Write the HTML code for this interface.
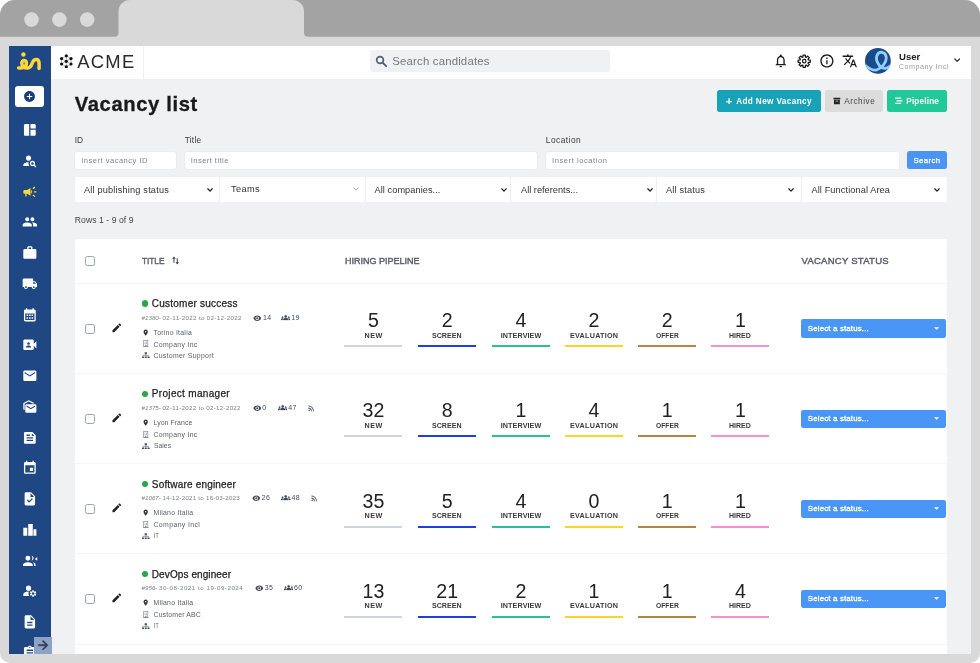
<!DOCTYPE html>
<html lang="en"><head><meta charset="utf-8"><title>Vacancy list</title>
<style>
html,body{margin:0;padding:0;background:#fff;}
body{width:980px;height:663px;overflow:hidden;position:relative;font-family:"Liberation Sans",sans-serif;}
#root{position:absolute;left:0;top:0;width:980px;height:663px;overflow:hidden;filter:blur(0.4px);}
.b{position:absolute;display:block;box-sizing:border-box;}
.t{position:absolute;display:block;white-space:nowrap;}
</style></head><body><div id="root">
<svg class="b" style="left:0;top:0" width="980" height="663" viewBox="0 0 980 663">
<path d="M0 15 A15 15 0 0 1 15 0 H965 A15 15 0 0 1 980 15 V653 A10 10 0 0 1 970 663 H10 A10 10 0 0 1 0 653 Z" fill="#d9d9d9"/>
<path d="M0 15 A15 15 0 0 1 15 0 H130 A11.5 11.5 0 0 0 118.5 11.5 V32.7 A4 4 0 0 1 114.5 36.7 H0 Z" fill="#a3a3a3"/>
<path d="M292.5 0 H965 A15 15 0 0 1 980 15 V36.7 H308 A4 4 0 0 1 304 32.7 V11.5 A11.5 11.5 0 0 0 292.5 0 Z" fill="#a3a3a3"/>
<circle cx="31.5" cy="19.6" r="7.3" fill="#d9d9d9"/><circle cx="59.4" cy="19.6" r="7.3" fill="#d9d9d9"/><circle cx="87.2" cy="19.6" r="7.3" fill="#d9d9d9"/>
</svg>
<div class="b" id="vp" style="left:9.20px;top:46.10px;width:961.60px;height:607.70px;background:#eff1f3;overflow:hidden;">
<div class="b" style="left:-9.20px;top:-46.10px;width:980px;height:663px;">
<div class="b" style="left:9.20px;top:46.00px;width:42.20px;height:610.00px;background:#1e4784;"></div>
<svg class="b" style="left:9.10px;top:46.00px;" width="42.00" height="34.00" viewBox="0 0 42 34"><g fill="none" stroke="#ffd83a" stroke-width="3.5" stroke-linecap="round" stroke-linejoin="round">
<path d="M9.6 22 C13 22.3 17.4 21.5 17.4 17.6 C17.4 13.6 12.8 13.4 12.8 17.2 C12.8 20.4 15.4 22.2 18.6 22.0 C22.4 21.8 22.6 18.2 23.6 16.2 C25.2 12.8 29.4 12.6 30.0 16.4 C30.3 18.6 30.1 21.0 30.1 22.6"/>
</g><circle cx="14.4" cy="8.5" r="2.2" fill="#ffd83a"/></svg>
<div class="b" style="left:14.50px;top:85.90px;width:29.30px;height:21.00px;background:#fff;border-radius:3px;"></div>
<svg class="b" style="left:22.80px;top:90.10px;" width="13.00" height="13.00" viewBox="0 0 24 24"><path fill="#1c3c78" d="M12 2C6.48 2 2 6.48 2 12s4.48 10 10 10 10-4.480 10-10S17.520 2 12 2zm5 11h-4v4h-2v-4H7v-2h4V7h2v4h4v2z"/></svg>
<svg class="b" style="left:22.15px;top:122.05px;" width="15.70" height="15.70" viewBox="0 0 24 24"><path fill="#fff" d="M11 21H5c-1.100 0-2-.9-2-2V5c0-1.100.9-2 2-2h6v18zm2 0h6c1.100 0 2-.9 2-2v-7h-8v9zm8-11V5c0-1.100-.9-2-2-2h-6v7h8z"/></svg>
<svg class="b" style="left:22.15px;top:152.81px;" width="15.70" height="15.70" viewBox="0 0 24 24"><path fill="#fff" d="M10 12c2.210 0 4-1.790 4-4s-1.790-4-4-4-4 1.790-4 4 1.790 4 4 4zm.350 2.010C7.620 13.910 2 15.270 2 18v2h9.540c-2.470-2.760-1.230-5.890-1.190-5.990zm9.080 4.010c.360-.590.570-1.280.570-2.020 0-2.210-1.790-4-4-4s-4 1.790-4 4 1.790 4 4 4c.740 0 1.430-.220 2.020-.570L20.590 22 22 20.590l-2.570-2.570zM16 18c-1.100 0-2-.9-2-2s.9-2 2-2 2 .9 2 2-.9 2-2 2z"/></svg>
<svg class="b" style="left:22.15px;top:183.57px;" width="15.70" height="15.70" viewBox="0 0 24 24"><path fill="#ffd83a" d="M18 11v2h4v-2h-4zm-2 6.610c.960.710 2.210 1.650 3.200 2.390.4-.530.8-1.070 1.200-1.600-.990-.740-2.240-1.680-3.200-2.400-.4.540-.8 1.080-1.200 1.610zM20.400 5.600c-.4-.530-.8-1.070-1.200-1.600-.990.740-2.240 1.680-3.200 2.400.4.530.8 1.070 1.200 1.600.960-.720 2.210-1.650 3.200-2.400zM4 9c-1.100 0-2 .9-2 2v2c0 1.100.9 2 2 2h1v4h2v-4h1l5 3V6L8 9H4zm11.500 3c0-1.330-.580-2.530-1.500-3.350v6.690c.920-.810 1.500-2.010 1.500-3.340z"/></svg>
<svg class="b" style="left:22.15px;top:214.33px;" width="15.70" height="15.70" viewBox="0 0 24 24"><path fill="#fff" d="M16 11c1.660 0 2.990-1.340 2.990-3S17.660 5 16 5c-1.660 0-3 1.340-3 3s1.340 3 3 3zm-8 0c1.660 0 2.990-1.340 2.990-3S9.660 5 8 5C6.340 5 5 6.340 5 8s1.340 3 3 3zm0 2c-2.330 0-7 1.170-7 3.500V19h14v-2.500c0-2.330-4.670-3.500-7-3.500zm8 0c-.290 0-.620.020-.970.050 1.160.840 1.970 1.970 1.970 3.450V19h6v-2.500c0-2.330-4.670-3.500-7-3.500z"/></svg>
<svg class="b" style="left:22.15px;top:245.09px;" width="15.70" height="15.70" viewBox="0 0 24 24"><path fill="#fff" d="M20 6h-4V4c0-1.110-.890-2-2-2h-4c-1.110 0-2 .890-2 2v2H4c-1.110 0-1.990.890-1.990 2L2 19c0 1.110.890 2 2 2h16c1.110 0 2-.890 2-2V8c0-1.110-.890-2-2-2zm-6 0h-4V4h4v2z"/></svg>
<svg class="b" style="left:22.15px;top:275.85px;" width="15.70" height="15.70" viewBox="0 0 24 24"><path fill="#fff" d="M20 8h-3V4H3c-1.100 0-2 .9-2 2v11h2c0 1.660 1.340 3 3 3s3-1.340 3-3h6c0 1.660 1.340 3 3 3s3-1.340 3-3h2v-5l-3-4zM6 18.500c-.830 0-1.500-.670-1.500-1.500s.670-1.500 1.500-1.500 1.500.670 1.500 1.500-.670 1.500-1.500 1.500zm13.500-9l1.960 2.500H17V9.500h2.500zm-1.500 9c-.830 0-1.500-.670-1.500-1.500s.670-1.500 1.500-1.500 1.500.670 1.500 1.500-.670 1.500-1.500 1.500z"/></svg>
<svg class="b" style="left:22.15px;top:306.61px;" width="15.70" height="15.70" viewBox="0 0 24 24"><path fill="#fff" d="M19 4h-1V2h-2v2H8V2H6v2H5c-1.110 0-1.990.9-1.990 2L3 20c0 1.100.890 2 2 2h14c1.100 0 2-.9 2-2V6c0-1.100-.9-2-2-2zm0 16H5V10h14v10zM7 11.500h2.400v2.400H7zm3.800 0h2.400v2.400h-2.400zm3.800 0H17v2.400h-2.400zM7 15.600h2.400V18H7zm3.800 0h2.400V18h-2.400zm3.800 0H17V18h-2.400z"/></svg>
<svg class="b" style="left:22.15px;top:337.37px;" width="15.70" height="15.70" viewBox="0 0 24 24"><path fill="#fff" d="M18 10.480V6c0-1.100-.9-2-2-2H4c-1.100 0-2 .9-2 2v12c0 1.100.9 2 2 2h12c1.100 0 2-.9 2-2v-4.480l4 3.980v-11l-4 3.980zM10 8c1.100 0 2 .9 2 2s-.9 2-2 2-2-.9-2-2 .9-2 2-2zm4 8H6v-.570c0-.810.480-1.530 1.220-1.850.850-.370 1.790-.580 2.780-.580.990 0 1.930.210 2.780.580.740.320 1.220 1.040 1.220 1.850V16z"/></svg>
<svg class="b" style="left:22.15px;top:368.13px;" width="15.70" height="15.70" viewBox="0 0 24 24"><path fill="#fff" d="M20 4H4c-1.100 0-1.990.9-1.990 2L2 18c0 1.100.9 2 2 2h16c1.100 0 2-.9 2-2V6c0-1.100-.9-2-2-2zm0 4l-8 5-8-5V6l8 5 8-5v2z"/></svg>
<svg class="b" style="left:22.15px;top:398.89px;" width="15.70" height="15.70" viewBox="0 0 24 24"><path fill="#fff" d="M18.830 7h-2.600L10.500 4 4 7.400V17c-1.100 0-2-.9-2-2V7.170c0-.530.320-1.090.8-1.340L10.500 2l7.540 3.830c.430.230.730.7.790 1.170zM20 8H7c-1.100 0-2 .9-2 2v9c0 1.100.9 2 2 2h13c1.100 0 2-.9 2-2v-9c0-1.100-.9-2-2-2zm0 3.670L13.500 15.500 7 11.670V10l6.500 3.830L20 10v1.670z"/></svg>
<svg class="b" style="left:22.15px;top:429.65px;" width="15.70" height="15.70" viewBox="0 0 24 24"><path fill="#fff" d="M16 3H5C3.900 3 3 3.900 3 5v14c0 1.100.9 2 2 2h14c1.100 0 2-.9 2-2V8L16 3z M7 7h5v2H7V7z M17 17H7v-2h10V17z M17 13H7v-2h10V13z M15 9V5l4 4H15z"/></svg>
<svg class="b" style="left:22.15px;top:460.41px;" width="15.70" height="15.70" viewBox="0 0 24 24"><path fill="#fff" d="M17 12h-5v5h5v-5zM16 1v2H8V1H6v2H5c-1.110 0-1.990.9-1.990 2L3 19c0 1.100.890 2 2 2h14c1.100 0 2-.9 2-2V5c0-1.100-.9-2-2-2h-1V1h-2zm3 18H5V8h14v11z"/></svg>
<svg class="b" style="left:22.15px;top:491.17px;" width="15.70" height="15.70" viewBox="0 0 24 24"><path fill="#fff" d="M14 2H6c-1.100 0-1.990.9-1.990 2L4 20c0 1.100.890 2 1.990 2H18c1.100 0 2-.9 2-2V8l-6-6zm-3.060 16L7.400 14.460l1.410-1.410 2.120 2.120 4.240-4.240 1.410 1.410L10.940 18zM13 9V3.500L18.500 9H13z"/></svg>
<svg class="b" style="left:22.15px;top:521.93px;" width="15.70" height="15.70" viewBox="0 0 24 24"><path fill="#fff" d="M2 8.800h6V21H2z M9.500 3h7v18h-7z M17.500 11H22v10h-4.500z"/></svg>
<svg class="b" style="left:22.15px;top:552.69px;" width="15.70" height="15.70" viewBox="0 0 24 24"><path fill="#fff" d="M5.200 8a3.800 3.800 0 1 0 7.600 0a3.800 3.800 0 1 0-7.600 0z M1.500 20v-2c0-2.700 5-4 7.500-4s7.500 1.300 7.500 4v2z M14.500 4.300c1.900.4 3.200 2 3.200 3.700s-1.300 3.300-3.200 3.700c.9-1 1.400-2.300 1.400-3.700s-.5-2.700-1.400-3.700z M16.500 14.300c2.200.5 4.300 1.700 4.300 3.700v2h-2.300v-2c0-1.500-.8-2.700-2-3.700z M23.300 6.300v5.400L19.600 9z"/></svg>
<svg class="b" style="left:22.15px;top:583.45px;" width="15.70" height="15.70" viewBox="0 0 24 24"><path fill="#fff" d="M6 8a4 4 0 1 0 8 0a4 4 0 1 0-8 0zM10.670 13.020c-.220-.010-.440-.020-.670-.020-2.420 0-4.680.670-6.610 1.820-.880.520-1.390 1.500-1.390 2.530V20h9.260c-.790-1.130-1.260-2.510-1.260-4 0-1.070.250-2.070.670-2.980zM20.750 16c0-.220-.030-.420-.060-.630l1.140-1.010-1-1.730-1.450.490c-.320-.270-.680-.480-1.080-.630L18 11h-2l-.300 1.490c-.4.150-.760.360-1.080.630l-1.450-.490-1 1.730 1.140 1.010c-.030.210-.060.410-.060.630s.030.420.060.630l-1.140 1.010 1 1.730 1.450-.490c.320.270.680.480 1.080.630L16 21h2l.300-1.490c.4-.150.760-.360 1.080-.630l1.450.490 1-1.730-1.140-1.010c.030-.210.060-.410.060-.630zM17 18c-1.100 0-2-.9-2-2s.9-2 2-2 2 .9 2 2-.9 2-2 2z"/></svg>
<svg class="b" style="left:22.15px;top:614.21px;" width="15.70" height="15.70" viewBox="0 0 24 24"><path fill="#fff" d="M14 2H6c-1.100 0-1.990.9-1.990 2L4 20c0 1.100.890 2 1.990 2H18c1.100 0 2-.9 2-2V8l-6-6zm2 16H8v-2h8v2zm0-4H8v-2h8v2zm-3-5V3.500L18.500 9H13z"/></svg>
<svg class="b" style="left:22.15px;top:644.97px;" width="15.70" height="15.70" viewBox="0 0 24 24"><path fill="#fff" d="M19 3h-4.180C14.400 1.840 13.300 1 12 1c-1.300 0-2.400.840-2.820 2H5c-1.100 0-2 .9-2 2v14c0 1.100.9 2 2 2h14c1.100 0 2-.9 2-2V5c0-1.100-.9-2-2-2zm-7 0c.550 0 1 .450 1 1s-.450 1-1 1-1-.450-1-1 .450-1 1-1zm2 14H7v-2h7v2zm3-4H7v-2h10v2zm0-4H7V7h10v2z"/></svg>
<div class="b" style="left:34.30px;top:636.80px;width:17.30px;height:17.50px;background:#8da2c4;"></div>
<svg class="b" style="left:35.60px;top:637.70px;" width="14.40" height="14.40" viewBox="0 0 24 24"><path fill="#2b3a55" stroke="#2b3a55" stroke-width="0.9" d="M12 4l-1.410 1.410L16.170 11H4v2h12.170l-5.580 5.590L12 20l8-8z"/></svg>
<div class="b" style="left:51.40px;top:46.00px;width:920.00px;height:33.30px;background:#fff;"></div>
<div class="b" style="left:143.30px;top:46.00px;width:0.80px;height:33.30px;background:#f2f2f2;"></div>
<svg class="b" style="left:58.50px;top:53.60px;" width="14.60" height="14.60" viewBox="0 0 24 24"><line x1="12" y1="12" x2="12.00" y2="3.00" stroke="#555" stroke-width="0.7"/><line x1="12.00" y1="3.00" x2="19.79" y2="7.50" stroke="#555" stroke-width="0.7"/><line x1="12" y1="12" x2="19.79" y2="7.50" stroke="#555" stroke-width="0.7"/><line x1="19.79" y1="7.50" x2="19.79" y2="16.50" stroke="#555" stroke-width="0.7"/><line x1="12" y1="12" x2="19.79" y2="16.50" stroke="#555" stroke-width="0.7"/><line x1="19.79" y1="16.50" x2="12.00" y2="21.00" stroke="#555" stroke-width="0.7"/><line x1="12" y1="12" x2="12.00" y2="21.00" stroke="#555" stroke-width="0.7"/><line x1="12.00" y1="21.00" x2="4.21" y2="16.50" stroke="#555" stroke-width="0.7"/><line x1="12" y1="12" x2="4.21" y2="16.50" stroke="#555" stroke-width="0.7"/><line x1="4.21" y1="16.50" x2="4.21" y2="7.50" stroke="#555" stroke-width="0.7"/><line x1="12" y1="12" x2="4.21" y2="7.50" stroke="#555" stroke-width="0.7"/><line x1="4.21" y1="7.50" x2="12.00" y2="3.00" stroke="#555" stroke-width="0.7"/><circle cx="12.00" cy="3.00" r="2.6" fill="#111"/><circle cx="19.79" cy="7.50" r="2.6" fill="#111"/><circle cx="19.79" cy="16.50" r="2.6" fill="#111"/><circle cx="12.00" cy="21.00" r="2.6" fill="#111"/><circle cx="4.21" cy="16.50" r="2.6" fill="#111"/><circle cx="4.21" cy="7.50" r="2.6" fill="#111"/><circle cx="12" cy="12" r="2.6" fill="#111"/></svg>
<span class="t" style="left:77.20px;top:51px;font-size:18.40px;line-height:21px;color:#2a2a2a;letter-spacing:1.279px;">ACME</span>
<div class="b" style="left:370.20px;top:49.90px;width:240.00px;height:22.40px;background:#eff1f3;border-radius:3px;"></div>
<svg class="b" style="left:374.60px;top:55.00px;" width="12.60" height="12.60" viewBox="0 0 24 24"><circle cx="9.6" cy="9.6" r="6.4" fill="none" stroke="#4f5d73" stroke-width="3.2"/><path d="M14.6 14.600L21.2 21.200" stroke="#4f5d73" stroke-width="3.6" stroke-linecap="round"/></svg>
<span class="t" style="left:392.30px;top:55px;font-size:11.40px;line-height:12px;color:#777;letter-spacing:0.174px;">Search candidates</span>
<svg class="b" style="left:772.80px;top:53.20px;" width="15.60" height="15.60" viewBox="0 0 24 24"><path fill="#1b1b1b" d="M12 22c1.100 0 2-.9 2-2h-4c0 1.100.9 2 2 2zm6-6v-5c0-3.070-1.630-5.640-4.500-6.320V4c0-.830-.670-1.500-1.500-1.500s-1.500.670-1.500 1.500v.680C7.640 5.360 6 7.920 6 11v5l-2 2v1h16v-1l-2-2zm-2 1H8v-6c0-2.480 1.510-4.500 4-4.500s4 2.020 4 4.500v6z"/></svg>
<svg class="b" style="left:796.50px;top:53.80px;" width="14.40" height="14.40" viewBox="0 0 24 24"><path d="M22.11 10.05 L22.11 13.95 L18.88 14.13 L18.37 15.36 L20.53 17.78 L17.78 20.53 L15.36 18.37 L14.13 18.88 L13.95 22.11 L10.05 22.11 L9.87 18.88 L8.64 18.37 L6.22 20.53 L3.47 17.78 L5.63 15.36 L5.12 14.13 L1.89 13.95 L1.89 10.05 L5.12 9.87 L5.63 8.64 L3.47 6.22 L6.22 3.47 L8.64 5.63 L9.87 5.12 L10.05 1.89 L13.95 1.89 L14.13 5.12 L15.36 5.63 L17.78 3.47 L20.53 6.22 L18.37 8.64 L18.88 9.87 Z" fill="none" stroke="#1b1b1b" stroke-width="2.1" stroke-linejoin="round"/><circle cx="12" cy="12" r="2.9" fill="none" stroke="#1b1b1b" stroke-width="2"/></svg>
<svg class="b" style="left:818.90px;top:53.10px;" width="15.80" height="15.80" viewBox="0 0 24 24"><path fill="#1b1b1b" d="M11 7h2v2h-2zm0 4h2v6h-2zm1-9C6.480 2 2 6.480 2 12s4.480 10 10 10 10-4.480 10-10S17.520 2 12 2zm0 18c-4.410 0-8-3.590-8-8s3.590-8 8-8 8 3.590 8 8-3.590 8-8 8z"/></svg>
<svg class="b" style="left:842.20px;top:53.40px;" width="15.60" height="15.60" viewBox="0 0 24 24"><path fill="#1b1b1b" d="M12.870 15.070l-2.540-2.510.030-.030c1.740-1.940 2.980-4.170 3.710-6.530H17V4h-7V2H8v2H1v1.990h11.170C11.500 7.920 10.440 9.750 9 11.350 8.070 10.320 7.300 9.190 6.690 8h-2c.730 1.630 1.730 3.170 2.980 4.560l-5.090 5.020L4 19l5-5 3.110 3.110.760-2.040zM18.500 10h-2L12 22h2l1.120-3h4.750L21 22h2l-4.500-12zm-2.620 7l1.620-4.330L19.120 17h-3.240z"/></svg>
<svg class="b" style="left:865.20px;top:48.40px;" width="25.80" height="25.80" viewBox="0 0 25.8 25.8"><defs><clipPath id="avc"><circle cx="12.9" cy="12.9" r="12.9"/></clipPath></defs>
<circle cx="12.9" cy="12.9" r="12.9" fill="#1b4a8c"/>
<g clip-path="url(#avc)"><path d="M-1 16.5 C2.5 19.5 7 23 11.5 22 C16.5 20.5 22 14 21.2 9 C20.4 3.5 14.2 2.6 12 7.4 C10.2 11.8 13.2 17.6 17.2 19.8 C20.4 21.4 23.8 19.6 27 16.6" fill="none" stroke="#8fd0ff" stroke-width="2.800" stroke-linecap="round"/></g></svg>
<span class="t" style="left:898.80px;top:51px;font-size:9.70px;line-height:11px;color:#222;font-weight:700;transform:scaleX(0.9829);transform-origin:0 0;">User</span>
<span class="t" style="left:898.80px;top:62px;font-size:7.20px;line-height:9px;color:#9aa0a8;letter-spacing:0.508px;">Company Incl</span>
<svg class="b" style="left:954.00px;top:58.30px;" width="6.40" height="4.40" viewBox="0 0 8 5"><path d="M1 1 L4 4 L7 1" fill="none" stroke="#333" stroke-width="1.5" stroke-linecap="round" stroke-linejoin="round"/></svg>
<span class="t" style="left:74.80px;top:93px;font-size:20.20px;line-height:22px;color:#1a1a1a;font-weight:700;letter-spacing:0.622px;-webkit-text-stroke:0.3px #1a1a1a;">Vacancy list</span>
<div class="b" style="left:717.20px;top:89.70px;width:103.50px;height:22.10px;background:#17a2b8;border-radius:2.5px;"></div>
<span class="t" style="left:725.70px;top:95px;font-size:11.20px;line-height:12px;color:#fff;font-weight:700;">+</span>
<span class="t" style="left:736.20px;top:97px;font-size:8.20px;line-height:9px;color:#fff;font-weight:700;letter-spacing:0.373px;">Add New Vacancy</span>
<div class="b" style="left:824.80px;top:89.70px;width:58.10px;height:22.10px;background:#dcdcdc;border-radius:2.5px;"></div>
<svg class="b" style="left:833.00px;top:96.80px;" width="7.80" height="7.80" viewBox="0 0 16 16"><path d="M1 1.500h14v3.800H1z M2 6.300h12V15H2z" fill="#222"/><rect x="5.5" y="7.800" width="5" height="1.600" fill="#dcdcdc"/></svg>
<span class="t" style="left:844.20px;top:97px;font-size:8.20px;line-height:9px;color:#444;letter-spacing:0.543px;">Archive</span>
<div class="b" style="left:887.30px;top:89.70px;width:59.80px;height:22.10px;background:#20c997;border-radius:2.5px;"></div>
<svg class="b" style="left:895.20px;top:97.00px;" width="7.60" height="7.60" viewBox="0 0 13.5 14"><path d="M0 1h11v2.200H0z M2.5 5.900h11v2.200h-11z M0 10.800h11V13H0z" fill="#fff"/></svg>
<span class="t" style="left:906.30px;top:97px;font-size:8.20px;line-height:9px;color:#fff;font-weight:700;letter-spacing:0.166px;">Pipeline</span>
<span class="t" style="left:74.80px;top:135px;font-size:8.40px;line-height:10px;color:#3a3a3a;">ID</span>
<span class="t" style="left:184.70px;top:135px;font-size:8.40px;line-height:10px;color:#3a3a3a;letter-spacing:0.236px;">Title</span>
<span class="t" style="left:545.80px;top:135px;font-size:8.40px;line-height:10px;color:#3a3a3a;letter-spacing:0.463px;">Location</span>
<div class="b" style="left:74.80px;top:151.50px;width:101.40px;height:17.70px;background:#fff;border-radius:2.5px;box-shadow:0 0 0 0.6px #e6e9ec;"></div>
<div class="b" style="left:184.70px;top:151.50px;width:352.40px;height:17.70px;background:#fff;border-radius:2.5px;box-shadow:0 0 0 0.6px #e6e9ec;"></div>
<div class="b" style="left:545.80px;top:151.50px;width:353.00px;height:17.70px;background:#fff;border-radius:2.5px;box-shadow:0 0 0 0.6px #e6e9ec;"></div>
<span class="t" style="left:81.20px;top:156px;font-size:7.60px;line-height:9px;color:#7f848b;letter-spacing:0.481px;">Insert vacancy ID</span>
<span class="t" style="left:190.80px;top:156px;font-size:7.60px;line-height:9px;color:#7f848b;letter-spacing:0.423px;">Insert title</span>
<span class="t" style="left:552.00px;top:156px;font-size:7.60px;line-height:9px;color:#7f848b;letter-spacing:0.549px;">Insert location</span>
<div class="b" style="left:907.20px;top:151.40px;width:39.90px;height:18.10px;background:#4a94f5;border-radius:2.5px;"></div>
<span class="t" style="left:913.55px;top:156px;font-size:7.90px;line-height:9px;color:#fff;letter-spacing:0.294px;-webkit-text-stroke:0.25px #fff;">Search</span>
<div class="b" style="left:74.80px;top:177.30px;width:144.50px;height:25.10px;background:#fff;border-radius:2px;"></div>
<span class="t" style="left:83.90px;top:185px;font-size:9.20px;line-height:10px;color:#333;letter-spacing:0.185px;">All publishing status</span>
<svg class="b" style="left:206.50px;top:187.80px;" width="6.00" height="4.00" viewBox="0 0 9 6"><path d="M1.200 1.200 L4.500 4.600 L7.800 1.200" fill="none" stroke="#222" stroke-width="1.900" stroke-linecap="round" stroke-linejoin="round"/></svg>
<div class="b" style="left:220.24px;top:177.30px;width:144.50px;height:25.10px;background:#fff;border-radius:2px;"></div>
<span class="t" style="left:231.00px;top:184px;font-size:9.20px;line-height:10px;color:#333;letter-spacing:0.376px;">Teams</span>
<svg class="b" style="left:352.54px;top:187.20px;" width="6.00" height="4.20" viewBox="0 0 9 6"><path d="M1 1 L4.500 4.500 L8 1" fill="none" stroke="#888" stroke-width="1.200" stroke-linecap="round" stroke-linejoin="round"/></svg>
<div class="b" style="left:365.68px;top:177.30px;width:144.50px;height:25.10px;background:#fff;border-radius:2px;"></div>
<span class="t" style="left:374.50px;top:185px;font-size:9.20px;line-height:10px;color:#333;letter-spacing:0.071px;">All companies...</span>
<svg class="b" style="left:500.88px;top:187.80px;" width="6.00" height="4.00" viewBox="0 0 9 6"><path d="M1.200 1.200 L4.500 4.600 L7.800 1.200" fill="none" stroke="#222" stroke-width="1.900" stroke-linecap="round" stroke-linejoin="round"/></svg>
<div class="b" style="left:511.12px;top:177.30px;width:144.50px;height:25.10px;background:#fff;border-radius:2px;"></div>
<span class="t" style="left:521.00px;top:185px;font-size:9.20px;line-height:10px;color:#333;letter-spacing:0.017px;">All referents...</span>
<svg class="b" style="left:646.72px;top:187.80px;" width="6.00" height="4.00" viewBox="0 0 9 6"><path d="M1.200 1.200 L4.500 4.600 L7.800 1.200" fill="none" stroke="#222" stroke-width="1.900" stroke-linecap="round" stroke-linejoin="round"/></svg>
<div class="b" style="left:656.56px;top:177.30px;width:144.50px;height:25.10px;background:#fff;border-radius:2px;"></div>
<span class="t" style="left:666.00px;top:185px;font-size:9.20px;line-height:10px;color:#333;letter-spacing:0.186px;">All status</span>
<svg class="b" style="left:788.06px;top:187.80px;" width="6.00" height="4.00" viewBox="0 0 9 6"><path d="M1.200 1.200 L4.500 4.600 L7.800 1.200" fill="none" stroke="#222" stroke-width="1.900" stroke-linecap="round" stroke-linejoin="round"/></svg>
<div class="b" style="left:802.00px;top:177.30px;width:144.50px;height:25.10px;background:#fff;border-radius:2px;"></div>
<span class="t" style="left:811.50px;top:185px;font-size:9.20px;line-height:10px;color:#333;letter-spacing:0.100px;">All Functional Area</span>
<svg class="b" style="left:933.50px;top:187.80px;" width="6.00" height="4.00" viewBox="0 0 9 6"><path d="M1.200 1.200 L4.500 4.600 L7.800 1.200" fill="none" stroke="#222" stroke-width="1.900" stroke-linecap="round" stroke-linejoin="round"/></svg>
<span class="t" style="left:74.80px;top:215px;font-size:8.60px;line-height:10px;color:#444;letter-spacing:0.062px;">Rows 1 - 9 of 9</span>
<div class="b" style="left:74.80px;top:238.60px;width:872.30px;height:430.00px;background:#fff;border-radius:3px;"></div>
<div class="b" style="left:85.40px;top:255.90px;width:10.00px;height:10.00px;background:#fff;border-radius:2.4px;border:1.2px solid #9aa2b2;"></div>
<span class="t" style="left:142.20px;top:255px;font-size:9.50px;line-height:11px;color:#5a6270;transform:scaleX(0.8661);transform-origin:0 0;-webkit-text-stroke:0.45px #5a6270;">TITLE</span>
<svg class="b" style="left:172.40px;top:256.30px;" width="7.20" height="9.00" viewBox="0 0 10 12"><path d="M2.700 0.300 L0.200 3.400 H2 V9 H3.400 V3.400 H5.200 Z M7.300 11.700 L4.800 8.600 H6.600 V3 H8 V8.600 H9.800 Z" fill="#3a4150"/></svg>
<span class="t" style="left:345.00px;top:255px;font-size:9.50px;line-height:11px;color:#5a6270;transform:scaleX(0.9471);transform-origin:0 0;-webkit-text-stroke:0.45px #5a6270;">HIRING PIPELINE</span>
<span class="t" style="left:801.50px;top:255px;font-size:9.50px;line-height:11px;color:#5a6270;letter-spacing:0.257px;-webkit-text-stroke:0.45px #5a6270;">VACANCY STATUS</span>
<div class="b" style="left:74.80px;top:283.30px;width:872.30px;height:0.90px;background:#f5f6f8;"></div>
<div class="b" style="left:85.40px;top:323.90px;width:10.00px;height:10.00px;background:#fff;border-radius:2.4px;border:1.2px solid #9aa2b2;"></div>
<svg class="b" style="left:111.30px;top:321.90px;" width="11.60" height="11.60" viewBox="0 0 24 24"><path fill="#222" d="M3 17.250V21h3.750L17.810 9.940l-3.750-3.750L3 17.250zM20.710 7.040c.390-.390.390-1.020 0-1.410l-2.340-2.340c-.390-.390-1.020-.390-1.410 0l-1.830 1.830 3.750 3.750 1.830-1.830z"/></svg>
<div class="b" style="left:141.6px;top:300.40px;width:6.2px;height:6.2px;border-radius:50%;background:#28a745;"></div>
<span class="t" style="left:151.80px;top:298px;font-size:10.00px;line-height:11px;color:#222;letter-spacing:0.237px;-webkit-text-stroke:0.25px #222;">Customer success</span>
<span class="t" style="left:141.60px;top:314px;font-size:6.20px;line-height:7px;color:#7d8188;font-style:italic;">#1380-</span>
<span class="t" style="left:162.40px;top:314px;font-size:6.20px;line-height:7px;color:#7d8188;letter-spacing:0.331px;">02-11-2022 to 02-12-2022</span>
<svg class="b" style="left:252.80px;top:313.50px;" width="8.60" height="8.60" viewBox="0 0 24 24"><path fill="#414a58" d="M12 4.500C7 4.500 2.730 7.610 1 12c1.730 4.390 6 7.500 11 7.500s9.270-3.110 11-7.500c-1.730-4.390-6-7.500-11-7.500zM12 17c-2.760 0-5-2.240-5-5s2.240-5 5-5 5 2.240 5 5-2.240 5-5 5zm0-8c-1.660 0-3 1.340-3 3s1.340 3 3 3 3-1.340 3-3-1.340-3-3-3z"/></svg>
<span class="t" style="left:263.00px;top:314px;font-size:7.00px;line-height:7px;color:#414a58;letter-spacing:0.467px;">14</span>
<svg class="b" style="left:281.00px;top:312.80px;" width="9.40" height="9.40" viewBox="0 0 24 24"><path fill="#414a58" stroke="#414a58" stroke-width="0.7" d="M12 12.750c1.630 0 3.070.390 4.240.9 1.080.480 1.760 1.560 1.760 2.730V18H6v-1.610c0-1.180.680-2.260 1.760-2.730 1.170-.520 2.610-.910 4.240-.910zM4 13c1.100 0 2-.9 2-2s-.9-2-2-2-2 .9-2 2 .9 2 2 2zm1.130 1.100c-.370-.060-.740-.1-1.130-.1-.990 0-1.930.210-2.780.580C.480 14.900 0 15.620 0 16.430V18h4.500v-1.610c0-.830.230-1.610.630-2.290zM20 13c1.100 0 2-.9 2-2s-.9-2-2-2-2 .9-2 2 .9 2 2 2zm4 3.430c0-.810-.480-1.530-1.220-1.850-.850-.370-1.790-.580-2.780-.580-.390 0-.760.040-1.130.1.4.680.630 1.460.630 2.290V18H24v-1.570zM12 6c1.660 0 3 1.340 3 3s-1.340 3-3 3-3-1.340-3-3 1.340-3 3-3z"/></svg>
<span class="t" style="left:291.20px;top:314px;font-size:7.00px;line-height:7px;color:#414a58;letter-spacing:0.467px;">19</span>
<svg class="b" style="left:142.30px;top:328.50px;" width="7.40" height="7.40" viewBox="0 0 24 24"><path fill="#333" d="M12 2C8.130 2 5 5.130 5 9c0 5.250 7 13 7 13s7-7.750 7-13c0-3.870-3.130-7-7-7zm0 9.500c-1.380 0-2.500-1.120-2.500-2.500s1.120-2.500 2.500-2.500 2.500 1.120 2.500 2.500-1.120 2.500-2.500 2.500z"/></svg>
<span class="t" style="left:153.50px;top:329px;font-size:6.90px;line-height:7px;color:#5b6068;letter-spacing:0.251px;">Torino Italia</span>
<svg class="b" style="left:143.30px;top:340.40px;" width="5.60" height="7.30" viewBox="0 0 12 14"><rect x="1.600" y="0.600" width="8.800" height="12" fill="none" stroke="#6b7280" stroke-width="1.200"/><path d="M0 13h12" stroke="#6b7280" stroke-width="1.200"/><path d="M3.600 3h1.600v1.600H3.600zM6.800 3h1.600v1.600H6.800zM3.600 6h1.600v1.600H3.600zM6.800 6h1.600v1.600H6.800zM4.800 9.400h2.400V12.600H4.800z" fill="#6b7280"/></svg>
<span class="t" style="left:153.50px;top:341px;font-size:6.90px;line-height:7px;color:#5b6068;letter-spacing:0.315px;">Company Inc</span>
<svg class="b" style="left:142.20px;top:352.40px;" width="7.60" height="6.40" viewBox="0 0 16 12"><path d="M5.600 0h4.800v4H5.600z M0 8.500h4.400v3.500H0z M5.800 8.500h4.400v3.500H5.800z M11.600 8.500H16v3.500h-4.400z" fill="#4b5563"/><path d="M8 4v2.300M2.200 8.500V6.300h11.600v2.200M8 6.300v2.200" fill="none" stroke="#4b5563" stroke-width="1.100"/></svg>
<span class="t" style="left:153.50px;top:352px;font-size:6.90px;line-height:7px;color:#5b6068;letter-spacing:0.281px;">Customer Support</span>
<span class="t" style="left:368.00px;top:309px;font-size:19.60px;line-height:22px;color:#222;">5</span>
<span class="t" style="left:364.45px;top:331px;font-size:7.20px;line-height:9px;color:#3a3a3a;font-weight:700;letter-spacing:0.601px;">NEW</span>
<div class="b" style="left:344.40px;top:345.30px;width:58.10px;height:2.10px;background:#cfd4de;"></div>
<span class="t" style="left:441.80px;top:309px;font-size:19.60px;line-height:22px;color:#222;">2</span>
<span class="t" style="left:432.45px;top:331px;font-size:7.20px;line-height:9px;color:#3a3a3a;font-weight:700;transform:scaleX(0.9864);transform-origin:0 0;">SCREEN</span>
<div class="b" style="left:418.20px;top:345.30px;width:58.10px;height:2.10px;background:#1f3fe6;"></div>
<span class="t" style="left:515.60px;top:309px;font-size:19.60px;line-height:22px;color:#222;">4</span>
<span class="t" style="left:500.75px;top:331px;font-size:7.20px;line-height:9px;color:#3a3a3a;font-weight:700;letter-spacing:0.091px;">INTERVIEW</span>
<div class="b" style="left:492.00px;top:345.30px;width:58.10px;height:2.10px;background:#2bbf9b;"></div>
<span class="t" style="left:588.60px;top:309px;font-size:19.60px;line-height:22px;color:#222;">2</span>
<span class="t" style="left:570.05px;top:331px;font-size:7.20px;line-height:9px;color:#3a3a3a;font-weight:700;letter-spacing:0.252px;">EVALUATION</span>
<div class="b" style="left:565.00px;top:345.30px;width:58.10px;height:2.10px;background:#ffd426;"></div>
<span class="t" style="left:661.70px;top:309px;font-size:19.60px;line-height:22px;color:#222;">2</span>
<span class="t" style="left:655.75px;top:331px;font-size:7.20px;line-height:9px;color:#3a3a3a;font-weight:700;transform:scaleX(0.9345);transform-origin:0 0;">OFFER</span>
<div class="b" style="left:638.10px;top:345.30px;width:58.10px;height:2.10px;background:#b5853f;"></div>
<span class="t" style="left:734.90px;top:309px;font-size:19.60px;line-height:22px;color:#222;">1</span>
<span class="t" style="left:729.40px;top:331px;font-size:7.20px;line-height:9px;color:#3a3a3a;font-weight:700;transform:scaleX(0.9776);transform-origin:0 0;">HIRED</span>
<div class="b" style="left:711.30px;top:345.30px;width:58.10px;height:2.10px;background:#f78fd0;"></div>
<div class="b" style="left:800.80px;top:319.40px;width:145.00px;height:18.30px;background:#4a96f7;border-radius:2.2px;"></div>
<span class="t" style="left:807.80px;top:324px;font-size:7.90px;line-height:9px;color:#fff;letter-spacing:0.153px;-webkit-text-stroke:0.3px #fff;">Select a status...</span>
<svg class="b" style="left:934.20px;top:327.10px;" width="5.20" height="3.00" viewBox="0 0 10 5"><path d="M0 0h10L5 5z" fill="#fff"/></svg>
<div class="b" style="left:74.80px;top:373.20px;width:872.30px;height:0.90px;background:#f5f6f8;"></div>
<div class="b" style="left:85.40px;top:414.00px;width:10.00px;height:10.00px;background:#fff;border-radius:2.4px;border:1.2px solid #9aa2b2;"></div>
<svg class="b" style="left:111.30px;top:412.00px;" width="11.60" height="11.60" viewBox="0 0 24 24"><path fill="#222" d="M3 17.250V21h3.750L17.810 9.940l-3.750-3.750L3 17.250zM20.710 7.040c.390-.390.390-1.020 0-1.410l-2.340-2.340c-.390-.390-1.020-.390-1.410 0l-1.830 1.830 3.750 3.750 1.830-1.830z"/></svg>
<div class="b" style="left:141.6px;top:390.50px;width:6.2px;height:6.2px;border-radius:50%;background:#28a745;"></div>
<span class="t" style="left:151.80px;top:388px;font-size:10.00px;line-height:11px;color:#222;letter-spacing:0.324px;-webkit-text-stroke:0.25px #222;">Project manager</span>
<span class="t" style="left:141.60px;top:404px;font-size:6.20px;line-height:7px;color:#7d8188;font-style:italic;">#1375-</span>
<span class="t" style="left:162.40px;top:404px;font-size:6.20px;line-height:7px;color:#7d8188;letter-spacing:0.292px;">02-11-2022 to 02-12-2022</span>
<svg class="b" style="left:252.50px;top:403.60px;" width="8.60" height="8.60" viewBox="0 0 24 24"><path fill="#414a58" d="M12 4.500C7 4.500 2.730 7.610 1 12c1.730 4.390 6 7.500 11 7.500s9.270-3.110 11-7.500c-1.730-4.390-6-7.500-11-7.500zM12 17c-2.760 0-5-2.240-5-5s2.240-5 5-5 5 2.240 5 5-2.240 5-5 5zm0-8c-1.660 0-3 1.340-3 3s1.340 3 3 3 3-1.340 3-3-1.340-3-3-3z"/></svg>
<span class="t" style="left:262.20px;top:404px;font-size:7.00px;line-height:7px;color:#414a58;">0</span>
<svg class="b" style="left:277.90px;top:402.90px;" width="9.40" height="9.40" viewBox="0 0 24 24"><path fill="#414a58" stroke="#414a58" stroke-width="0.7" d="M12 12.750c1.630 0 3.070.390 4.240.9 1.080.480 1.760 1.560 1.760 2.730V18H6v-1.610c0-1.180.680-2.260 1.760-2.730 1.170-.520 2.610-.910 4.240-.910zM4 13c1.100 0 2-.9 2-2s-.9-2-2-2-2 .9-2 2 .9 2 2 2zm1.130 1.100c-.370-.060-.740-.1-1.130-.1-.990 0-1.930.210-2.780.580C.480 14.900 0 15.620 0 16.430V18h4.500v-1.610c0-.830.230-1.610.630-2.290zM20 13c1.100 0 2-.9 2-2s-.9-2-2-2-2 .9-2 2 .9 2 2 2zm4 3.430c0-.810-.480-1.530-1.220-1.850-.850-.370-1.790-.580-2.780-.580-.390 0-.760.040-1.130.1.4.680.630 1.460.630 2.290V18H24v-1.570zM12 6c1.660 0 3 1.340 3 3s-1.340 3-3 3-3-1.340-3-3 1.340-3 3-3z"/></svg>
<span class="t" style="left:288.20px;top:404px;font-size:7.00px;line-height:7px;color:#414a58;letter-spacing:0.467px;">47</span>
<svg class="b" style="left:306.80px;top:403.50px;" width="8.60" height="8.60" viewBox="0 0 24 24"><path fill="#5b6470" d="M6.180 15.640a2.180 2.180 0 1 0 0 4.360a2.180 2.180 0 1 0 0-4.360zM4 4.440v2.830c7.030 0 12.730 5.700 12.730 12.730h2.830c0-8.590-6.970-15.560-15.560-15.560zm0 5.660v2.830c3.900 0 7.070 3.170 7.070 7.070h2.830c0-5.470-4.430-9.900-9.900-9.900z"/></svg>
<svg class="b" style="left:142.30px;top:418.60px;" width="7.40" height="7.40" viewBox="0 0 24 24"><path fill="#333" d="M12 2C8.130 2 5 5.130 5 9c0 5.250 7 13 7 13s7-7.750 7-13c0-3.870-3.130-7-7-7zm0 9.500c-1.380 0-2.500-1.120-2.500-2.500s1.120-2.500 2.500-2.500 2.500 1.120 2.500 2.500-1.120 2.500-2.500 2.500z"/></svg>
<span class="t" style="left:153.50px;top:419px;font-size:6.90px;line-height:7px;color:#5b6068;letter-spacing:0.070px;">Lyon France</span>
<svg class="b" style="left:143.30px;top:430.50px;" width="5.60" height="7.30" viewBox="0 0 12 14"><rect x="1.600" y="0.600" width="8.800" height="12" fill="none" stroke="#6b7280" stroke-width="1.200"/><path d="M0 13h12" stroke="#6b7280" stroke-width="1.200"/><path d="M3.600 3h1.600v1.600H3.600zM6.800 3h1.600v1.600H6.800zM3.600 6h1.600v1.600H3.600zM6.800 6h1.600v1.600H6.800zM4.800 9.400h2.400V12.600H4.800z" fill="#6b7280"/></svg>
<span class="t" style="left:153.50px;top:431px;font-size:6.90px;line-height:7px;color:#5b6068;letter-spacing:0.315px;">Company Inc</span>
<svg class="b" style="left:142.20px;top:442.50px;" width="7.60" height="6.40" viewBox="0 0 16 12"><path d="M5.600 0h4.800v4H5.600z M0 8.500h4.400v3.500H0z M5.800 8.500h4.400v3.500H5.800z M11.600 8.500H16v3.500h-4.400z" fill="#4b5563"/><path d="M8 4v2.300M2.200 8.500V6.300h11.600v2.200M8 6.300v2.200" fill="none" stroke="#4b5563" stroke-width="1.100"/></svg>
<span class="t" style="left:153.50px;top:442px;font-size:6.90px;line-height:7px;color:#5b6068;transform:scaleX(0.9907);transform-origin:0 0;">Sales</span>
<span class="t" style="left:362.55px;top:399px;font-size:19.60px;line-height:22px;color:#222;">32</span>
<span class="t" style="left:364.45px;top:421px;font-size:7.20px;line-height:9px;color:#3a3a3a;font-weight:700;letter-spacing:0.601px;">NEW</span>
<div class="b" style="left:344.40px;top:435.40px;width:58.10px;height:2.10px;background:#cfd4de;"></div>
<span class="t" style="left:441.80px;top:399px;font-size:19.60px;line-height:22px;color:#222;">8</span>
<span class="t" style="left:432.45px;top:421px;font-size:7.20px;line-height:9px;color:#3a3a3a;font-weight:700;transform:scaleX(0.9864);transform-origin:0 0;">SCREEN</span>
<div class="b" style="left:418.20px;top:435.40px;width:58.10px;height:2.10px;background:#1f3fe6;"></div>
<span class="t" style="left:515.60px;top:399px;font-size:19.60px;line-height:22px;color:#222;">1</span>
<span class="t" style="left:500.75px;top:421px;font-size:7.20px;line-height:9px;color:#3a3a3a;font-weight:700;letter-spacing:0.091px;">INTERVIEW</span>
<div class="b" style="left:492.00px;top:435.40px;width:58.10px;height:2.10px;background:#2bbf9b;"></div>
<span class="t" style="left:588.60px;top:399px;font-size:19.60px;line-height:22px;color:#222;">4</span>
<span class="t" style="left:570.05px;top:421px;font-size:7.20px;line-height:9px;color:#3a3a3a;font-weight:700;letter-spacing:0.252px;">EVALUATION</span>
<div class="b" style="left:565.00px;top:435.40px;width:58.10px;height:2.10px;background:#ffd426;"></div>
<span class="t" style="left:661.70px;top:399px;font-size:19.60px;line-height:22px;color:#222;">1</span>
<span class="t" style="left:655.75px;top:421px;font-size:7.20px;line-height:9px;color:#3a3a3a;font-weight:700;transform:scaleX(0.9345);transform-origin:0 0;">OFFER</span>
<div class="b" style="left:638.10px;top:435.40px;width:58.10px;height:2.10px;background:#b5853f;"></div>
<span class="t" style="left:734.90px;top:399px;font-size:19.60px;line-height:22px;color:#222;">1</span>
<span class="t" style="left:729.40px;top:421px;font-size:7.20px;line-height:9px;color:#3a3a3a;font-weight:700;transform:scaleX(0.9776);transform-origin:0 0;">HIRED</span>
<div class="b" style="left:711.30px;top:435.40px;width:58.10px;height:2.10px;background:#f78fd0;"></div>
<div class="b" style="left:800.80px;top:409.50px;width:145.00px;height:18.30px;background:#4a96f7;border-radius:2.2px;"></div>
<span class="t" style="left:807.80px;top:414px;font-size:7.90px;line-height:9px;color:#fff;letter-spacing:0.153px;-webkit-text-stroke:0.3px #fff;">Select a status...</span>
<svg class="b" style="left:934.20px;top:417.20px;" width="5.20" height="3.00" viewBox="0 0 10 5"><path d="M0 0h10L5 5z" fill="#fff"/></svg>
<div class="b" style="left:74.80px;top:463.30px;width:872.30px;height:0.90px;background:#f5f6f8;"></div>
<div class="b" style="left:85.40px;top:504.10px;width:10.00px;height:10.00px;background:#fff;border-radius:2.4px;border:1.2px solid #9aa2b2;"></div>
<svg class="b" style="left:111.30px;top:502.10px;" width="11.60" height="11.60" viewBox="0 0 24 24"><path fill="#222" d="M3 17.250V21h3.750L17.810 9.940l-3.750-3.750L3 17.250zM20.710 7.040c.390-.390.390-1.020 0-1.410l-2.340-2.340c-.390-.390-1.020-.390-1.410 0l-1.830 1.830 3.750 3.750 1.830-1.830z"/></svg>
<div class="b" style="left:141.6px;top:480.60px;width:6.2px;height:6.2px;border-radius:50%;background:#28a745;"></div>
<span class="t" style="left:151.80px;top:479px;font-size:10.00px;line-height:11px;color:#222;letter-spacing:0.184px;-webkit-text-stroke:0.25px #222;">Software engineer</span>
<span class="t" style="left:141.60px;top:494px;font-size:6.20px;line-height:7px;color:#7d8188;font-style:italic;">#1067-</span>
<span class="t" style="left:162.40px;top:494px;font-size:6.20px;line-height:7px;color:#7d8188;letter-spacing:0.237px;">14-12-2021 to 16-03-2023</span>
<svg class="b" style="left:251.90px;top:493.70px;" width="8.60" height="8.60" viewBox="0 0 24 24"><path fill="#414a58" d="M12 4.500C7 4.500 2.730 7.610 1 12c1.730 4.390 6 7.500 11 7.500s9.270-3.110 11-7.500c-1.730-4.390-6-7.500-11-7.500zM12 17c-2.760 0-5-2.240-5-5s2.240-5 5-5 5 2.240 5 5-2.240 5-5 5zm0-8c-1.660 0-3 1.340-3 3s1.340 3 3 3 3-1.340 3-3-1.340-3-3-3z"/></svg>
<span class="t" style="left:261.60px;top:494px;font-size:7.00px;line-height:7px;color:#414a58;letter-spacing:0.467px;">26</span>
<svg class="b" style="left:281.20px;top:493.00px;" width="9.40" height="9.40" viewBox="0 0 24 24"><path fill="#414a58" stroke="#414a58" stroke-width="0.7" d="M12 12.750c1.630 0 3.070.390 4.240.9 1.080.480 1.760 1.560 1.760 2.730V18H6v-1.610c0-1.180.680-2.260 1.760-2.730 1.170-.520 2.610-.910 4.240-.910zM4 13c1.100 0 2-.9 2-2s-.9-2-2-2-2 .9-2 2 .9 2 2 2zm1.130 1.100c-.370-.060-.740-.1-1.130-.1-.990 0-1.930.210-2.780.580C.480 14.900 0 15.620 0 16.430V18h4.500v-1.610c0-.830.230-1.610.630-2.290zM20 13c1.100 0 2-.9 2-2s-.9-2-2-2-2 .9-2 2 .9 2 2 2zm4 3.430c0-.810-.480-1.530-1.220-1.850-.850-.370-1.790-.580-2.780-.580-.390 0-.760.040-1.130.1.4.680.630 1.460.630 2.290V18H24v-1.570zM12 6c1.660 0 3 1.340 3 3s-1.340 3-3 3-3-1.340-3-3 1.340-3 3-3z"/></svg>
<span class="t" style="left:291.50px;top:494px;font-size:7.00px;line-height:7px;color:#414a58;letter-spacing:0.467px;">48</span>
<svg class="b" style="left:310.40px;top:493.60px;" width="8.60" height="8.60" viewBox="0 0 24 24"><path fill="#5b6470" d="M6.180 15.640a2.180 2.180 0 1 0 0 4.360a2.180 2.180 0 1 0 0-4.360zM4 4.440v2.830c7.030 0 12.730 5.700 12.730 12.730h2.830c0-8.590-6.970-15.560-15.560-15.560zm0 5.660v2.830c3.900 0 7.070 3.170 7.070 7.070h2.830c0-5.470-4.430-9.900-9.900-9.900z"/></svg>
<svg class="b" style="left:142.30px;top:508.70px;" width="7.40" height="7.40" viewBox="0 0 24 24"><path fill="#333" d="M12 2C8.130 2 5 5.130 5 9c0 5.250 7 13 7 13s7-7.750 7-13c0-3.870-3.130-7-7-7zm0 9.500c-1.380 0-2.500-1.120-2.500-2.500s1.120-2.500 2.500-2.500 2.500 1.120 2.500 2.500-1.120 2.500-2.500 2.500z"/></svg>
<span class="t" style="left:153.50px;top:509px;font-size:6.90px;line-height:7px;color:#5b6068;letter-spacing:0.240px;">Milano Italia</span>
<svg class="b" style="left:143.30px;top:520.60px;" width="5.60" height="7.30" viewBox="0 0 12 14"><rect x="1.600" y="0.600" width="8.800" height="12" fill="none" stroke="#6b7280" stroke-width="1.200"/><path d="M0 13h12" stroke="#6b7280" stroke-width="1.200"/><path d="M3.600 3h1.600v1.600H3.600zM6.800 3h1.600v1.600H6.800zM3.600 6h1.600v1.600H3.600zM6.800 6h1.600v1.600H6.800zM4.800 9.400h2.400V12.600H4.800z" fill="#6b7280"/></svg>
<span class="t" style="left:153.50px;top:521px;font-size:6.90px;line-height:7px;color:#5b6068;letter-spacing:0.383px;">Company Incl</span>
<svg class="b" style="left:142.20px;top:532.60px;" width="7.60" height="6.40" viewBox="0 0 16 12"><path d="M5.600 0h4.800v4H5.600z M0 8.500h4.400v3.500H0z M5.800 8.500h4.400v3.500H5.800z M11.600 8.500H16v3.500h-4.400z" fill="#4b5563"/><path d="M8 4v2.300M2.200 8.500V6.300h11.600v2.200M8 6.300v2.200" fill="none" stroke="#4b5563" stroke-width="1.100"/></svg>
<span class="t" style="left:153.50px;top:532px;font-size:6.90px;line-height:7px;color:#5b6068;transform:scaleX(0.7502);transform-origin:0 0;">IT</span>
<span class="t" style="left:362.55px;top:490px;font-size:19.60px;line-height:22px;color:#222;">35</span>
<span class="t" style="left:364.45px;top:511px;font-size:7.20px;line-height:9px;color:#3a3a3a;font-weight:700;letter-spacing:0.601px;">NEW</span>
<div class="b" style="left:344.40px;top:525.50px;width:58.10px;height:2.10px;background:#cfd4de;"></div>
<span class="t" style="left:441.80px;top:490px;font-size:19.60px;line-height:22px;color:#222;">5</span>
<span class="t" style="left:432.45px;top:511px;font-size:7.20px;line-height:9px;color:#3a3a3a;font-weight:700;transform:scaleX(0.9864);transform-origin:0 0;">SCREEN</span>
<div class="b" style="left:418.20px;top:525.50px;width:58.10px;height:2.10px;background:#1f3fe6;"></div>
<span class="t" style="left:515.60px;top:490px;font-size:19.60px;line-height:22px;color:#222;">4</span>
<span class="t" style="left:500.75px;top:511px;font-size:7.20px;line-height:9px;color:#3a3a3a;font-weight:700;letter-spacing:0.091px;">INTERVIEW</span>
<div class="b" style="left:492.00px;top:525.50px;width:58.10px;height:2.10px;background:#2bbf9b;"></div>
<span class="t" style="left:588.60px;top:490px;font-size:19.60px;line-height:22px;color:#222;">0</span>
<span class="t" style="left:570.05px;top:511px;font-size:7.20px;line-height:9px;color:#3a3a3a;font-weight:700;letter-spacing:0.252px;">EVALUATION</span>
<div class="b" style="left:565.00px;top:525.50px;width:58.10px;height:2.10px;background:#ffd426;"></div>
<span class="t" style="left:661.70px;top:490px;font-size:19.60px;line-height:22px;color:#222;">1</span>
<span class="t" style="left:655.75px;top:511px;font-size:7.20px;line-height:9px;color:#3a3a3a;font-weight:700;transform:scaleX(0.9345);transform-origin:0 0;">OFFER</span>
<div class="b" style="left:638.10px;top:525.50px;width:58.10px;height:2.10px;background:#b5853f;"></div>
<span class="t" style="left:734.90px;top:490px;font-size:19.60px;line-height:22px;color:#222;">1</span>
<span class="t" style="left:729.40px;top:511px;font-size:7.20px;line-height:9px;color:#3a3a3a;font-weight:700;transform:scaleX(0.9776);transform-origin:0 0;">HIRED</span>
<div class="b" style="left:711.30px;top:525.50px;width:58.10px;height:2.10px;background:#f78fd0;"></div>
<div class="b" style="left:800.80px;top:499.60px;width:145.00px;height:18.30px;background:#4a96f7;border-radius:2.2px;"></div>
<span class="t" style="left:807.80px;top:504px;font-size:7.90px;line-height:9px;color:#fff;letter-spacing:0.153px;-webkit-text-stroke:0.3px #fff;">Select a status...</span>
<svg class="b" style="left:934.20px;top:507.30px;" width="5.20" height="3.00" viewBox="0 0 10 5"><path d="M0 0h10L5 5z" fill="#fff"/></svg>
<div class="b" style="left:74.80px;top:553.40px;width:872.30px;height:0.90px;background:#f5f6f8;"></div>
<div class="b" style="left:85.40px;top:594.20px;width:10.00px;height:10.00px;background:#fff;border-radius:2.4px;border:1.2px solid #9aa2b2;"></div>
<svg class="b" style="left:111.30px;top:592.20px;" width="11.60" height="11.60" viewBox="0 0 24 24"><path fill="#222" d="M3 17.250V21h3.750L17.810 9.940l-3.750-3.750L3 17.250zM20.710 7.040c.390-.390.390-1.020 0-1.410l-2.340-2.340c-.390-.390-1.020-.390-1.410 0l-1.830 1.830 3.750 3.750 1.830-1.830z"/></svg>
<div class="b" style="left:141.6px;top:570.70px;width:6.2px;height:6.2px;border-radius:50%;background:#28a745;"></div>
<span class="t" style="left:151.80px;top:569px;font-size:10.00px;line-height:11px;color:#222;letter-spacing:0.099px;-webkit-text-stroke:0.25px #222;">DevOps engineer</span>
<span class="t" style="left:141.60px;top:584px;font-size:6.20px;line-height:7px;color:#7d8188;font-style:italic;">#956-</span>
<span class="t" style="left:158.96px;top:584px;font-size:6.20px;line-height:7px;color:#7d8188;letter-spacing:0.518px;">30-08-2021 to 19-09-2024</span>
<svg class="b" style="left:254.70px;top:583.80px;" width="8.60" height="8.60" viewBox="0 0 24 24"><path fill="#414a58" d="M12 4.500C7 4.500 2.730 7.610 1 12c1.730 4.390 6 7.500 11 7.500s9.270-3.110 11-7.500c-1.730-4.390-6-7.500-11-7.500zM12 17c-2.760 0-5-2.240-5-5s2.240-5 5-5 5 2.240 5 5-2.240 5-5 5zm0-8c-1.660 0-3 1.340-3 3s1.340 3 3 3 3-1.340 3-3-1.340-3-3-3z"/></svg>
<span class="t" style="left:264.70px;top:584px;font-size:7.00px;line-height:7px;color:#414a58;letter-spacing:0.467px;">35</span>
<svg class="b" style="left:284.10px;top:583.10px;" width="9.40" height="9.40" viewBox="0 0 24 24"><path fill="#414a58" stroke="#414a58" stroke-width="0.7" d="M12 12.750c1.630 0 3.070.390 4.240.9 1.080.480 1.760 1.560 1.760 2.730V18H6v-1.610c0-1.180.680-2.260 1.760-2.730 1.170-.520 2.610-.910 4.240-.910zM4 13c1.100 0 2-.9 2-2s-.9-2-2-2-2 .9-2 2 .9 2 2 2zm1.130 1.100c-.370-.060-.740-.1-1.130-.1-.990 0-1.930.210-2.780.580C.480 14.900 0 15.620 0 16.430V18h4.500v-1.610c0-.830.230-1.610.630-2.290zM20 13c1.100 0 2-.9 2-2s-.9-2-2-2-2 .9-2 2 .9 2 2 2zm4 3.430c0-.810-.480-1.530-1.220-1.850-.850-.370-1.790-.580-2.780-.580-.390 0-.760.040-1.130.1.4.680.630 1.460.630 2.290V18H24v-1.570zM12 6c1.660 0 3 1.340 3 3s-1.340 3-3 3-3-1.340-3-3 1.340-3 3-3z"/></svg>
<span class="t" style="left:293.90px;top:584px;font-size:7.00px;line-height:7px;color:#414a58;letter-spacing:0.467px;">60</span>
<svg class="b" style="left:142.30px;top:598.80px;" width="7.40" height="7.40" viewBox="0 0 24 24"><path fill="#333" d="M12 2C8.130 2 5 5.130 5 9c0 5.250 7 13 7 13s7-7.750 7-13c0-3.870-3.130-7-7-7zm0 9.500c-1.380 0-2.500-1.120-2.500-2.500s1.120-2.500 2.500-2.500 2.500 1.120 2.500 2.500-1.120 2.500-2.500 2.500z"/></svg>
<span class="t" style="left:153.50px;top:599px;font-size:6.90px;line-height:7px;color:#5b6068;letter-spacing:0.240px;">Milano Italia</span>
<svg class="b" style="left:143.30px;top:610.70px;" width="5.60" height="7.30" viewBox="0 0 12 14"><rect x="1.600" y="0.600" width="8.800" height="12" fill="none" stroke="#6b7280" stroke-width="1.200"/><path d="M0 13h12" stroke="#6b7280" stroke-width="1.200"/><path d="M3.600 3h1.600v1.600H3.600zM6.800 3h1.600v1.600H6.800zM3.600 6h1.600v1.600H3.600zM6.800 6h1.600v1.600H6.800zM4.800 9.400h2.400V12.600H4.800z" fill="#6b7280"/></svg>
<span class="t" style="left:153.50px;top:611px;font-size:6.90px;line-height:7px;color:#5b6068;letter-spacing:0.152px;">Customer ABC</span>
<svg class="b" style="left:142.20px;top:622.70px;" width="7.60" height="6.40" viewBox="0 0 16 12"><path d="M5.600 0h4.800v4H5.600z M0 8.500h4.400v3.500H0z M5.800 8.500h4.400v3.500H5.800z M11.600 8.500H16v3.500h-4.400z" fill="#4b5563"/><path d="M8 4v2.300M2.200 8.500V6.300h11.600v2.200M8 6.300v2.200" fill="none" stroke="#4b5563" stroke-width="1.100"/></svg>
<span class="t" style="left:153.50px;top:622px;font-size:6.90px;line-height:7px;color:#5b6068;transform:scaleX(0.7502);transform-origin:0 0;">IT</span>
<span class="t" style="left:362.55px;top:580px;font-size:19.60px;line-height:22px;color:#222;">13</span>
<span class="t" style="left:364.45px;top:601px;font-size:7.20px;line-height:9px;color:#3a3a3a;font-weight:700;letter-spacing:0.601px;">NEW</span>
<div class="b" style="left:344.40px;top:615.60px;width:58.10px;height:2.10px;background:#cfd4de;"></div>
<span class="t" style="left:436.35px;top:580px;font-size:19.60px;line-height:22px;color:#222;">21</span>
<span class="t" style="left:432.45px;top:601px;font-size:7.20px;line-height:9px;color:#3a3a3a;font-weight:700;transform:scaleX(0.9864);transform-origin:0 0;">SCREEN</span>
<div class="b" style="left:418.20px;top:615.60px;width:58.10px;height:2.10px;background:#1f3fe6;"></div>
<span class="t" style="left:515.60px;top:580px;font-size:19.60px;line-height:22px;color:#222;">2</span>
<span class="t" style="left:500.75px;top:601px;font-size:7.20px;line-height:9px;color:#3a3a3a;font-weight:700;letter-spacing:0.091px;">INTERVIEW</span>
<div class="b" style="left:492.00px;top:615.60px;width:58.10px;height:2.10px;background:#2bbf9b;"></div>
<span class="t" style="left:588.60px;top:580px;font-size:19.60px;line-height:22px;color:#222;">1</span>
<span class="t" style="left:570.05px;top:601px;font-size:7.20px;line-height:9px;color:#3a3a3a;font-weight:700;letter-spacing:0.252px;">EVALUATION</span>
<div class="b" style="left:565.00px;top:615.60px;width:58.10px;height:2.10px;background:#ffd426;"></div>
<span class="t" style="left:661.70px;top:580px;font-size:19.60px;line-height:22px;color:#222;">1</span>
<span class="t" style="left:655.75px;top:601px;font-size:7.20px;line-height:9px;color:#3a3a3a;font-weight:700;transform:scaleX(0.9345);transform-origin:0 0;">OFFER</span>
<div class="b" style="left:638.10px;top:615.60px;width:58.10px;height:2.10px;background:#b5853f;"></div>
<span class="t" style="left:734.90px;top:580px;font-size:19.60px;line-height:22px;color:#222;">4</span>
<span class="t" style="left:729.40px;top:601px;font-size:7.20px;line-height:9px;color:#3a3a3a;font-weight:700;transform:scaleX(0.9776);transform-origin:0 0;">HIRED</span>
<div class="b" style="left:711.30px;top:615.60px;width:58.10px;height:2.10px;background:#f78fd0;"></div>
<div class="b" style="left:800.80px;top:589.70px;width:145.00px;height:18.30px;background:#4a96f7;border-radius:2.2px;"></div>
<span class="t" style="left:807.80px;top:594px;font-size:7.90px;line-height:9px;color:#fff;letter-spacing:0.153px;-webkit-text-stroke:0.3px #fff;">Select a status...</span>
<svg class="b" style="left:934.20px;top:597.40px;" width="5.20" height="3.00" viewBox="0 0 10 5"><path d="M0 0h10L5 5z" fill="#fff"/></svg>
<div class="b" style="left:74.80px;top:643.50px;width:872.30px;height:0.90px;background:#f5f6f8;"></div>
</div></div>
</div></body></html>
